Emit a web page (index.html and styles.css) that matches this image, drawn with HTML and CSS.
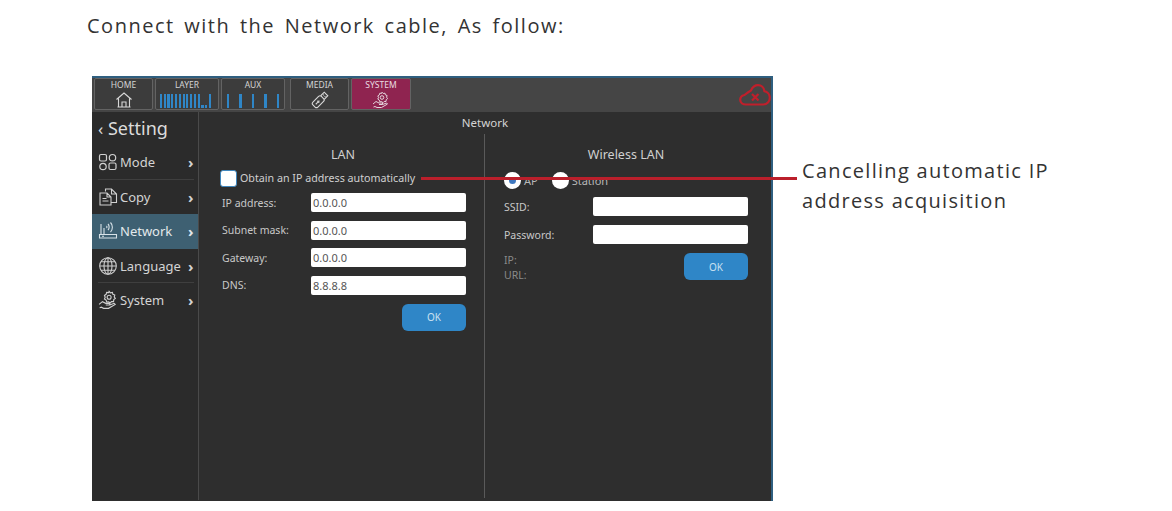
FILE: index.html
```html
<!DOCTYPE html>
<html lang="en">
<head>
  <meta charset="UTF-8" />
  <title>Network setting</title>
  <link rel="stylesheet" href="styles.css">
</head>
<body>

<h1 class="intro">Connect with the Network cable, As follow:</h1>

<div class="figure">
  <div class="screen">
    <!-- top tabs -->
    <div class="top-bar">
      <div class="tab tab-home">
        <span>HOME</span>
        <svg width="18" height="18" viewBox="0 0 18 18" fill="none" stroke="#d8d8d8" stroke-width="1.1"><path d="M1.500 8.500 9 2l7.500 6.500M3.500 7.500V16h11V7.500M7 16v-5h4v5M2.500 16h13"/></svg>
      </div>
      <div class="tab tab-layer">
        <span>LAYER</span>
        <div class="meters meters-layer">
          <i></i><i></i><i></i><i></i><i></i><i></i><i></i><i></i><i></i><i></i><i></i>
          <i class="low"></i><i class="low"></i><i></i>
        </div>
      </div>
      <div class="tab tab-aux">
        <span>AUX</span>
        <div class="meters meters-aux"><i></i><i></i><i></i><i></i><i></i></div>
      </div>
      <div class="tab tab-media">
        <span>MEDIA</span>
        <svg width="18" height="18" viewBox="0 0 18 18" fill="none" stroke="#d8d8d8" stroke-width="1.100"><g transform="rotate(-45 9 9)"><rect x="0.500" y="5.500" width="12" height="7" rx="2"/><path d="M12.500 6.500h5v5h-5M14.500 8h1M14.500 10h1M3 9h3M6 7.800l1.500 1.200L6 10.200"/></g></svg>
      </div>
      <div class="tab tab-system">
        <span>SYSTEM</span>
        <svg width="18" height="18" viewBox="0 0 18 18" fill="none" stroke="#e4d5dc" stroke-width="1"><circle cx="10" cy="6.500" r="1.800"/><path d="M10 1.200l1.200 1.300 1.800-.3.400 1.700 1.700.6-.5 1.700 1 1.400-1.400 1.100-.2 1.800-1.800 0-1.200 1.200-1.400-1.100-1.800.2-.5-1.700-1.500-1 .7-1.600-.7-1.600 1.500-1 .5-1.700 1.800.2zM1 13l3-2.500 3 1.500h3.500v1.500H7M10.500 13.500l4-1.500 1 1-6 3.500H5L3 15.500 1.500 16"/></svg>
      </div>
      <svg class="cloud" width="32" height="22" viewBox="0 0 32 22" fill="none" stroke="#c01f2b" stroke-width="2.200"><path d="M7 20.500C3.500 20.500 1.200 18.500 1.200 15.800c0-2.400 1.800-4.200 4.300-4.800C8 9 10 7.500 12 6.500 13.500 3.200 16.300 1.200 19 1.200c3.400 0 6 2.500 6.400 6 3 .6 5.400 3.300 5.400 6.500 0 3.700-2.800 6.800-6.500 6.800z"/><path d="M13 10l6.500 6.500M19.500 10 13 16.500" stroke-width="2.200"/></svg>
    </div>

    <div class="body">
      <!-- left menu -->
      <div class="sidebar">
        <div class="back"><span class="back-arrow">‹</span> Setting</div>
        <div class="menu-item line">
          <svg width="20" height="20" viewBox="0 0 20 20" fill="none" stroke="#d0d0d0" stroke-width="1.200"><rect x="1.500" y="2.500" width="7" height="6.500" rx="1.500"/><circle cx="14.500" cy="5.700" r="3.200"/><circle cx="5" cy="14.500" r="3.200"/><rect x="11" y="11" width="7" height="6.500" rx="1.500"/></svg>
          <span class="menu-name">Mode</span><b>›</b>
        </div>
        <div class="menu-item">
          <svg width="20" height="20" viewBox="0 0 20 20" fill="none" stroke="#d0d0d0" stroke-width="1.100"><path d="M7.500 4.500V2h6l5 5v8.500H13M13.500 2v5h5"/><path d="M2 6h7l4 4v8H2zM9 6v4h4M4.500 11.500h4M4.500 14h6"/></svg>
          <span class="menu-name">Copy</span><b>›</b>
        </div>
        <div class="menu-item active">
          <svg width="20" height="20" viewBox="0 0 20 20" fill="none" stroke="#d8e2e8" stroke-width="1.100"><path d="M3 13V3M6 13V7M1.500 13.500h17v3.500h-17zM4 15.200h2M10 3c1.500 1.500 1.500 4.500 0 6M12.500 1.500c2.500 2.500 2.500 7 0 9.500M8.500 5c.6.600.6 1.400 0 2"/></svg>
          <span class="menu-name">Network</span><b>›</b>
        </div>
        <div class="menu-item line">
          <svg width="20" height="20" viewBox="0 0 20 20" fill="none" stroke="#d0d0d0" stroke-width="1.100"><circle cx="10" cy="10" r="8.300"/><ellipse cx="10" cy="10" rx="4" ry="8.300"/><path d="M10 1.700v16.600M1.700 10h16.600M2.800 5.800h14.400M2.800 14.200h14.400"/></svg>
          <span class="menu-name">Language</span><b>›</b>
        </div>
        <div class="menu-item">
          <svg width="20" height="20" viewBox="0 0 18 18" fill="none" stroke="#d0d0d0" stroke-width="1"><circle cx="10" cy="6.500" r="1.800"/><path d="M10 1.200l1.200 1.300 1.800-.3.400 1.700 1.700.6-.5 1.700 1 1.400-1.400 1.100-.2 1.800-1.800 0-1.200 1.200-1.400-1.100-1.800.2-.5-1.700-1.500-1 .7-1.600-.7-1.600 1.500-1 .5-1.700 1.800.2zM1 13l3-2.500 3 1.500h3.500v1.500H7M10.500 13.500l4-1.500 1 1-6 3.500H5L3 15.500 1.500 16"/></svg>
          <span class="menu-name">System</span><b>›</b>
        </div>
      </div>

      <!-- network page -->
      <div class="content">
        <div class="page-title">Network</div>
        <div class="columns">
          <div class="col-lan">
            <div class="col-title">LAN</div>
            <div class="check-row"><span class="check"></span>Obtain an IP address automatically</div>
            <div class="form lan-form">
              <label>IP address:</label><div class="field">0.0.0.0</div>
              <label>Subnet mask:</label><div class="field">0.0.0.0</div>
              <label>Gateway:</label><div class="field">0.0.0.0</div>
              <label>DNS:</label><div class="field">8.8.8.8</div>
            </div>
            <div class="actions lan-actions"><button class="ok">OK</button></div>
          </div>
          <div class="col-wifi">
            <div class="col-title">Wireless LAN</div>
            <div class="radio-row">
              <span class="radio on"></span><span class="radio-name">AP</span>
              <span class="radio"></span><span class="radio-name">Station</span>
            </div>
            <div class="form wifi-form">
              <label>SSID:</label><div class="field"></div>
              <label>Password:</label><div class="field"></div>
            </div>
            <div class="wifi-foot">
              <div class="info">IP:<br>URL:</div>
              <button class="ok">OK</button>
            </div>
          </div>
        </div>
      </div>
    </div>
  </div>

  <div class="callout">Cancelling automatic IP address acquisition</div>
  <!-- red leader line lies over the screen -->
  <div class="leader"></div>
</div>

</body>
</html>
```

FILE: styles.css
```css
html, body {
  margin: 0;
  padding: 0;
  background: white;
  height: 100%;
  overflow: hidden;
}

body {
  font-family: "Noto Sans", Arial, sans-serif;
}

.intro {
  margin: 0;
  padding: 13px 0 0 87px;
  height: 76px;
  box-sizing: border-box;
  font-family: "Open Sans", Arial, sans-serif;
  font-size: 20px;
  line-height: 26px;
  font-weight: 400;
  letter-spacing: 1.500px;
  word-spacing: 3px;
  color: #333;
}

.figure {
  position: relative;
  display: flex;
  align-items: flex-start;
  padding-left: 92px;
}

.screen {
  width: 681px;
  height: 425px;
  box-sizing: border-box;
  border-top: 2px solid #2f5f80;
  border-right: 2px solid #2f5f80;
  background: #2e2e2e;
  display: flex;
  flex-direction: column;
  flex-shrink: 0;
}

.top-bar {
  height: 34px;
  background: #454545;
  display: flex;
  align-items: flex-start;
  padding: 0 0 0 2px;
  gap: 2px;
  flex-shrink: 0;
}

.tab {
  height: 32px;
  box-sizing: border-box;
  background: #3c3c3c;
  border: 1px solid #636363;
  border-radius: 2px;
  display: flex;
  flex-direction: column;
  align-items: center;
  color: #d4d4d4;
  font-size: 8.500px;
  line-height: 11px;
}

.tab svg {
  margin-top: 1px;
}

.tab-home { width: 59px; }
.tab-layer { width: 64px; }
.tab-aux { width: 64px; margin-right: 3px; }
.tab-media { width: 59px; }
.tab-system { width: 60px; background: #8f2450; color: #e8dbe0; }

.meters {
  display: flex;
  align-items: flex-end;
  height: 14px;
  margin-top: 4px;
}

.meters i {
  display: block;
  height: 14px;
  background: #2f86c7;
}

.meters-layer { gap: 1.600px; margin-right: 3px; }
.meters-layer i { width: 2.200px; }
.meters-layer i.low { height: 3px; }
.meters-aux { gap: 10px; }
.meters-aux i { width: 2.500px; }

.cloud {
  margin-left: auto;
  margin-top: 6px;
}

.body {
  flex: 1;
  display: flex;
  min-height: 0;
}

.sidebar {
  width: 107px;
  box-sizing: border-box;
  border-right: 1px solid #4a4a4a;
  background: #2b2b2b;
  color: #d4d4d4;
  margin-bottom: 1px;
  flex-shrink: 0;
}

.back {
  height: 33px;
  padding: 0 0 0 6px;
  box-sizing: border-box;
  font-size: 18px;
  line-height: 32px;
  color: #dcdcdc;
}

.back-arrow {
  font-size: 17px;
}

.menu-item {
  height: 34.500px;
  box-sizing: border-box;
  display: flex;
  align-items: center;
  padding-left: 6px;
  font-size: 13px;
  position: relative;
}

.menu-item svg {
  flex-shrink: 0;
}

.menu-name {
  margin-left: 2px;
  flex: 1;
}

.menu-item b {
  width: 10px;
  font-size: 15px;
  font-weight: 700;
}

.menu-item.line::after {
  content: "";
  position: absolute;
  left: 6px;
  right: 4px;
  bottom: 0;
  height: 1px;
  background: #3f3f3f;
}

.menu-item.active {
  background: #3e6072;
  color: #e3e9ec;
}

.content {
  flex: 1;
  display: flex;
  flex-direction: column;
  min-width: 0;
}

.page-title {
  height: 22px;
  text-align: center;
  font-size: 11.500px;
  line-height: 22px;
  color: #d4d4d4;
}

.columns {
  flex: 1;
  display: flex;
  margin-bottom: 3px;
}

.col-lan {
  width: 286px;
  box-sizing: border-box;
  border-right: 1px solid #5a5a5a;
  padding: 0 18px 0 21px;
}

.col-wifi {
  flex: 1;
  padding: 0 23px 0 19px;
}

.col-title {
  height: 35px;
  padding-top: 10px;
  box-sizing: border-box;
  text-align: center;
  font-size: 12.500px;
  line-height: 22px;
  color: #d0d0d0;
}

.check-row {
  display: flex;
  align-items: center;
  height: 18px;
  font-size: 10.700px;
  color: #d0d0d0;
}

.check {
  width: 15px;
  height: 15px;
  background: white;
  border: 1px solid #3f86bd;
  border-radius: 3px;
  margin-right: 3px;
}

.form {
  display: grid;
  align-items: center;
  font-size: 10.500px;
  color: #c8c8c8;
}

.lan-form {
  grid-template-columns: 89px 155px;
  row-gap: 8.500px;
  margin-top: 6px;
  padding-left: 2px;
  width: 246px;
}

.wifi-form {
  grid-template-columns: 89px 155px;
  row-gap: 9px;
  margin-top: 8px;
}

.field {
  height: 19px;
  background: white;
  border-radius: 2px;
  color: #555;
  font-size: 11px;
  line-height: 19px;
  padding-left: 2px;
  box-sizing: border-box;
}

.actions {
  display: flex;
  justify-content: flex-end;
}

.lan-actions {
  margin-top: 9px;
}

.ok {
  width: 64px;
  height: 27px;
  background: #2f86c7;
  border: none;
  border-radius: 6px;
  color: #c9e0f1;
  font-family: "Noto Sans", Arial, sans-serif;
  font-size: 10px;
  padding: 0;
}

.radio-row {
  display: flex;
  align-items: center;
  height: 18px;
  margin-top: 2px;
  font-size: 11px;
  color: #b8b8b8;
}

.radio {
  width: 17px;
  height: 17px;
  border-radius: 50%;
  background: white;
  box-sizing: border-box;
  flex-shrink: 0;
}

.radio.on {
  border: 5px solid white;
  background: #3f78c0;
}

.radio-name {
  margin-left: 3px;
  margin-right: 14px;
}

.wifi-foot {
  display: flex;
  justify-content: space-between;
  margin-top: 9px;
}

.info {
  font-size: 10.500px;
  line-height: 15px;
  color: #8a8a8a;
}

.callout {
  width: 270px;
  margin: 80px 0 0 29px;
  font-family: "Open Sans", Arial, sans-serif;
  font-size: 20px;
  line-height: 30px;
  letter-spacing: 1.300px;
  color: #333;
}

.leader {
  position: absolute;
  left: 421px;
  top: 101px;
  width: 376px;
  height: 3px;
  background: #bb1f2b;
}
```
